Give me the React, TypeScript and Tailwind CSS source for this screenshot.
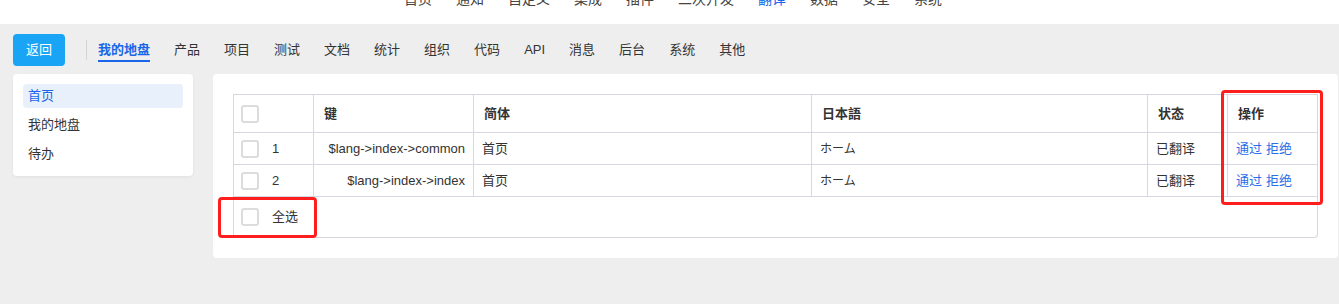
import { ReactNode } from 'react';

const topNav = ['首页', '通知', '自定义', '集成', '插件', '二次开发', '翻译', '数据', '安全', '系统'];
const tabs = ['我的地盘', '产品', '项目', '测试', '文档', '统计', '组织', '代码', 'API', '消息', '后台', '系统', '其他'];
const sideItems = ['首页', '我的地盘', '待办'];

const rows = [
  { id: 1, key: '$lang->index->common', zh: '首页', ja: 'ホーム', status: '已翻译' },
  { id: 2, key: '$lang->index->index', zh: '首页', ja: 'ホーム', status: '已翻译' },
];

const cols = 'grid grid-cols-[80px_160px_338px_1fr_80px_90px]';
const cell = 'border-r border-b border-[#d5d8e1] flex items-center min-w-0';

function Checkbox() {
  return <span className="inline-block w-[18px] h-[18px] shrink-0 rounded-[3px] border-2 border-[#dcdcdc] bg-white" />;
}

function HeadCell({ children }: { children: ReactNode }) {
  return <div className={`${cell} h-[38px] pl-2.5 font-bold text-[#333]`}>{children}</div>;
}

export default function App() {
  return (
    <div className="relative w-full h-[304px] overflow-hidden bg-[#eeeeee] text-[13px] text-[#333] font-['Liberation_Sans','Noto_Sans_CJK_SC',sans-serif]">
      {/* top nav, scrolled mostly out of view */}
      <div className="h-6 bg-white overflow-hidden">
        <div className="flex gap-6 pl-[404px] -mt-[11px] h-5 leading-5 text-[14px] text-[#444]">
          {topNav.map((t) => (
            <span key={t} className={t === '翻译' ? 'text-[#1a66e8]' : ''}>
              {t}
            </span>
          ))}
        </div>
      </div>

      <div className="pl-[13px] pr-px pt-2.5">
        <div className="flex items-center h-8">
          <button className="w-[52px] h-8 rounded bg-[#19a4f6] text-white text-[13px]">返回</button>
          <div className="ml-[21px] w-px h-5 bg-[#d4d4d4]" />
          <div className="ml-[11px] flex gap-6">
            {tabs.map((t, i) => (
              <div key={t + i} className="relative h-8 flex items-center leading-5">
                <span className={i === 0 ? 'font-bold text-[#1a66e8]' : 'text-[#333]'}>{t}</span>
                {i === 0 && <span className="absolute left-0 right-0 bottom-1 h-0.5 bg-[#1a66e8]" />}
              </div>
            ))}
          </div>
        </div>

        <div className="mt-2 flex items-start gap-5">
          <div className="w-[180px] rounded bg-white p-2.5 shadow-[0_1px_3px_rgba(0,0,0,0.06)]">
            {sideItems.map((s, i) => (
              <div
                key={s}
                className={`h-6 leading-6 px-[5px] rounded ${i === 0 ? 'bg-[#e8f0fc] text-[#1a66e8]' : 'mt-[5px] text-[#333]'}`}
              >
                {s}
              </div>
            ))}
          </div>

          <div className="flex-1 rounded bg-white p-5">
            <div className={`${cols} border-l border-t border-[#d5d8e1]`}>
              <div className={`${cell} h-[38px] pl-[7px]`}>
                <Checkbox />
              </div>
              <HeadCell>键</HeadCell>
              <HeadCell>简体</HeadCell>
              <HeadCell>日本語</HeadCell>
              <HeadCell>状态</HeadCell>
              <HeadCell>操作</HeadCell>

              {rows.map((r) => (
                <div key={r.id} className="contents">
                  <div className={`${cell} h-8 pl-[7px]`}>
                    <Checkbox />
                    <span className="ml-[13px]">{r.id}</span>
                  </div>
                  <div className={`${cell} h-8 justify-end pr-2`}>{r.key}</div>
                  <div className={`${cell} h-8 pl-2`}>{r.zh}</div>
                  <div className={`${cell} h-8 pl-2 text-[12px]`}>{r.ja}</div>
                  <div className={`${cell} h-8 pl-2`}>{r.status}</div>
                  <div className={`${cell} h-8 pl-2 gap-1 text-[#2a6ee8]`}>
                    <span>通过</span>
                    <span>拒绝</span>
                  </div>
                </div>
              ))}
            </div>
            <div className="h-[41px] flex items-center pl-[7px] border-l border-r border-b border-[#d5d8e1] rounded-b">
              <Checkbox />
              <span className="ml-[13px]">全选</span>
            </div>
          </div>
        </div>
      </div>

      {/* red annotation boxes */}
      <div className="absolute left-[1221px] top-[90px] w-[102px] h-[115px] border-[3px] border-[#ff1e1e] rounded-[4px]" />
      <div className="absolute left-[218px] top-[197px] w-[99px] h-[41px] border-[3px] border-[#ff1e1e] rounded-[4px]" />
    </div>
  );
}
